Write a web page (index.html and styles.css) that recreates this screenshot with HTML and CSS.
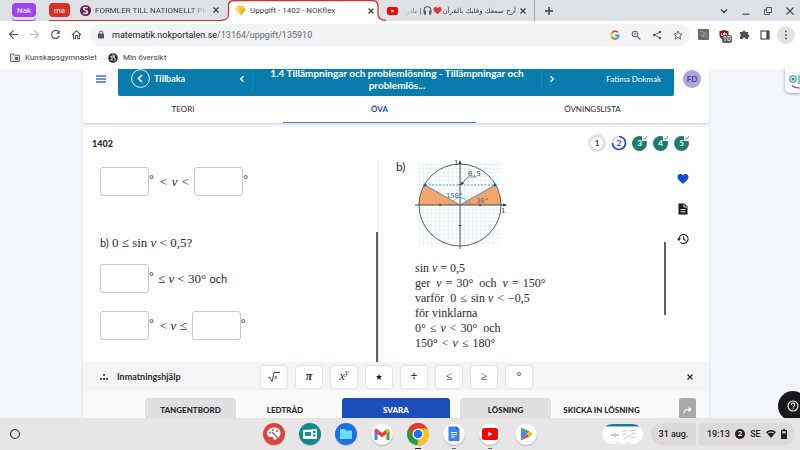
FILE: index.html
```html
<!DOCTYPE html>
<html lang="sv">
<head>
<meta charset="utf-8">
<title>Uppgift - 1402 - NOKflex</title>
<link rel="stylesheet" href="styles.css">
</head>
<body>
<div class="tabstrip">
  <button class="chip chip-purple">Nak</button>
  <div class="group">
    <button class="chip chip-red">ma</button>
    <div class="tab">
      <svg width="11" height="11" viewBox="0 0 11 11"><circle cx="5.500" cy="5.500" r="5.500" fill="#6b1d56"/><path d="M7.600 3C5.500 1.800 3.400 2.500 3.600 4c.2 1.500 4 1.300 3.900 3.100C7.300 8.900 4.500 8.800 3.200 7.800" fill="none" stroke="#fff" stroke-width="1.400"/></svg>
      <span class="tab-title">FORMLER TILL NATIONELLT PR</span>
      <button class="icon-btn" aria-label="Stäng flik"><svg width="8" height="8" viewBox="0 0 8 8"><path d="M1.500 1.500l5 5m0-5l-5 5" stroke="#3c4043" stroke-width="1.200"/></svg></button>
    </div>
  </div>
  <div class="tab tab-active">
    <svg class="tab-outline" width="170" height="21" viewBox="0 0 170 21"><path d="M0 20.300C6 20.300 7.500 18 7.500 14V6C7.500 2 9 .6 13 .6H151C155 .6 157 2 157 6v8c0 4 2 6.300 8 6.300V21H0z" fill="#fff"/><path d="M0 20.300C6 20.300 7.500 18 7.500 14V6C7.500 2 9 .6 13 .6H151C155 .6 157 2 157 6v8c0 4 2 6.300 8 6.300" fill="none" stroke="#c5352c" stroke-width="1.300"/></svg>
    <svg width="11" height="11" viewBox="0 0 11 11"><path d="M2.500 1h6L11 4.500 5.500 10.500 0 4.500z" fill="#fbc73b"/><path d="M2.500 1L4 4.500l1.500 6L0 4.500z" fill="#fddd7c"/><path d="M7 4.500L11 4.500 5.500 10.500z" fill="#eda91d"/></svg>
    <span class="tab-title">Uppgift - 1402 - NOKflex</span>
    <button class="icon-btn" aria-label="Stäng flik"><svg width="8" height="8" viewBox="0 0 8 8"><path d="M1.500 1.500l5 5m0-5l-5 5" stroke="#3c4043" stroke-width="1.200"/></svg></button>
  </div>
  <div class="tab tab-video">
    <svg width="11" height="8" viewBox="0 0 11 8"><rect width="11" height="8" rx="2" fill="#f00"/><path d="M4.300 2.200v3.600L7.400 4z" fill="#fff"/></svg>
    <span class="tab-title rtl" dir="rtl"><span>أرح سمعك وقلبك بالقرآن</span><svg width="9" height="9" viewBox="0 0 24 24"><path d="M12 22C5 16 1 13 1 8c0-6 8-8 11-2 3-6 11-4 11 2 0 5-4 8-11 14z" fill="#e8382f"/></svg><svg width="9" height="9" viewBox="0 0 24 24"><path d="M3 15v-4C3-1 21-1 21 11v4" fill="none" stroke="#555b63" stroke-width="3"/><rect x="2" y="12" width="6" height="11" rx="2" fill="#555b63"/><rect x="16" y="12" width="6" height="11" rx="2" fill="#555b63"/></svg><span>| نادر</span></span>
    <button class="icon-btn" aria-label="Stäng flik"><svg width="8" height="8" viewBox="0 0 8 8"><path d="M1.500 1.500l5 5m0-5l-5 5" stroke="#3c4043" stroke-width="1.200"/></svg></button>
  </div>
  <button class="icon-btn new-tab" aria-label="Ny flik"><svg width="10" height="10" viewBox="0 0 10 10"><path d="M5 1v8M1 5h8" stroke="#3c4043" stroke-width="1.500"/></svg></button>
  <div class="window-controls">
    <button class="icon-btn" aria-label="Sök flikar"><svg width="10" height="10" viewBox="0 0 10 10"><path d="M2 3.500l3 3 3-3" fill="none" stroke="#3c4043" stroke-width="1.400"/></svg></button>
    <button class="icon-btn" aria-label="Minimera"><svg width="10" height="10" viewBox="0 0 10 10"><path d="M1.500 8.200h7" stroke="#55595e" stroke-width="1.300"/></svg></button>
    <button class="icon-btn" aria-label="Återställ"><svg width="10" height="10" viewBox="0 0 10 10"><path d="M3.500 6.500v-5h5v5zM3.500 3.500h-2v5h5v-2" fill="none" stroke="#55595e"/></svg></button>
    <button class="icon-btn" aria-label="Stäng"><svg width="10" height="10" viewBox="0 0 10 10"><path d="M1.500 1.500l7 7m0-7l-7 7" stroke="#3c4043" stroke-width="1.100"/></svg></button>
  </div>
</div>

<div class="toolbar">
  <div class="nav">
    <button class="icon-btn" aria-label="Tillbaka"><svg width="11" height="11" viewBox="0 0 11 11"><path d="M10 5.500H1.500M5.500 1.500l-4 4 4 4" fill="none" stroke="#55595e" stroke-width="1.100"/></svg></button>
    <button class="icon-btn" aria-label="Framåt"><svg width="11" height="11" viewBox="0 0 11 11"><path d="M1 5.500h8.500M5.500 1.500l4 4-4 4" fill="none" stroke="#b9bcc1" stroke-width="1.100"/></svg></button>
    <button class="icon-btn" aria-label="Ladda om"><svg width="11" height="11" viewBox="0 0 11 11"><path d="M8.800 3A4 4 0 1 0 9.400 6.700" fill="none" stroke="#55595e" stroke-width="1.200"/><path d="M9.800 1v3.700H6.100z" fill="#55595e"/></svg></button>
    <button class="icon-btn" aria-label="Startsida"><svg width="11" height="11" viewBox="0 0 11 11"><path d="M1 6l4.500-4.300L10 6M2.500 5v4.700H4.500V6.500h2v3.200h2V5" fill="none" stroke="#55595e" stroke-width="1.100"/></svg></button>
  </div>
  <div class="omnibox">
    <svg width="8" height="9" viewBox="0 0 8 9"><rect x="1" y="3.500" width="6" height="5" rx=".6" fill="#55595e"/><path d="M2.400 4V2.500a1.600 1.600 0 0 1 3.200 0V4" fill="none" stroke="#55595e"/></svg>
    <span class="url"><b>matematik.nokportalen.se</b>/13164/uppgift/135910</span>
    <div class="omni-icons">
      <svg width="10" height="10" viewBox="0 0 10 10" fill="none" stroke-width="1.700"><path d="M8 2.500A3.600 3.600 0 0 0 2 3" stroke="#ea4335"/><path d="M2 3a3.600 3.600 0 0 0 0 4" stroke="#fbbc05"/><path d="M2 7a3.600 3.600 0 0 0 5.500 1" stroke="#34a853"/><path d="M7.500 8a3.600 3.600 0 0 0 1.200-2.700H5" stroke="#4285f4"/></svg>
      <svg width="10" height="10" viewBox="0 0 10 10"><circle cx="4" cy="4" r="2.900" fill="none" stroke="#55595e"/><path d="M6.300 6.300L9.300 9.300M2.700 4h2.600" stroke="#55595e" stroke-width="1.200"/></svg>
      <svg width="10" height="10" viewBox="0 0 10 10"><path d="M8 2L2.500 5 8 8" fill="none" stroke="#55595e" stroke-width=".9"/><g fill="#55595e"><circle cx="7.900" cy="2" r="1.300"/><circle cx="2.300" cy="5" r="1.300"/><circle cx="7.900" cy="8" r="1.300"/></g></svg>
      <svg width="10" height="10" viewBox="0 0 10 10"><path d="M5 1l1.200 2.700 3 .3-2.300 2 .7 3L5 7.400 2.400 9l.7-3L.8 4l3-.3z" fill="none" stroke="#55595e" stroke-width=".9"/></svg>
    </div>
  </div>
  <div class="extensions">
    <svg width="11" height="11" viewBox="0 0 11 11"><rect width="11" height="11" rx="1" fill="#6c6d70"/><path d="M2 3q3-2 4 1t3 0M2 6q2-1 3 1t4 0M4 9l3-6" fill="none" stroke="#a5a6a8" stroke-width=".8"/></svg>
    <div class="ublock"><svg width="10" height="10" viewBox="0 0 10 10"><path d="M5 0l4.500 1.200v4C9.500 8 7 9.500 5 10 3 9.500.5 8 .5 5.200v-4z" fill="#8d1016"/><path d="M2.500 3v2.500h2V3M5.500 2v4h2V3.800h-2" fill="none" stroke="#fff" stroke-width=".8"/></svg><span class="badge">10</span></div>
    <svg width="11" height="11" viewBox="0 0 11 11"><path d="M1 3h2.500a1.500 1.500 0 1 1 3 0H9v2.500a1.400 1.400 0 0 1 0 2.800V10H6.500a1.400 1.400 0 0 0-2.800 0H1V7.600a1.400 1.400 0 0 0 0-2.600z" fill="#4b4f54"/></svg>
    <svg width="10" height="10" viewBox="0 0 10 10"><rect x="1" y="1" width="8" height="8" fill="none" stroke="#4b4f54" stroke-width="1.200"/><path d="M6.300 1h2.700v8H6.300z" fill="#4b4f54"/></svg>
    <button class="more" aria-label="Meny"><svg width="4" height="10" viewBox="0 0 4 10" fill="#4b4f54"><circle cx="2" cy="1.500" r=".9"/><circle cx="2" cy="5" r=".9"/><circle cx="2" cy="8.500" r=".9"/></svg></button>
  </div>
</div>

<div class="bookmarks">
  <a href="#"><svg width="10" height="9" viewBox="0 0 10 9"><path d="M.6 1h3l1 1.200h4.800V8.400H.6z" fill="#e3e4e6" stroke="#606469"/><path d="M5 4h3v3H5z" fill="#606469"/></svg>Kunskapsgymnasiet</a>
  <a href="#"><svg width="10" height="10" viewBox="0 0 10 10"><circle cx="5" cy="5" r="4.800" fill="#2c2d2f"/><path d="M2 3l2 1v3M5 1v3l2 1v3M7 2L6 4M2.500 6l2 2" fill="none" stroke="#fff" stroke-width=".9"/></svg>Min översikt</a>
</div>

<div class="page">
  <main class="column">
    <header class="card header">
      <div class="header-row">
        <button class="icon-btn burger" aria-label="Meny"><svg width="10" height="8" viewBox="0 0 10 8"><path d="M0 1h10M0 4h10M0 7h10" stroke="#3a73c2" stroke-width="1.300"/></svg></button>
        <div class="banner">
          <a class="back" href="#"><svg width="19" height="19" viewBox="0 0 19 19" fill="none" stroke="#fff"><circle cx="9.500" cy="9.500" r="8.900" stroke-width=".9"/><path d="M11 6L7.500 9.500 11 13" stroke-width="1.600"/></svg>Tillbaka</a>
          <button class="icon-btn step" aria-label="Föregående"><svg width="6" height="8" viewBox="0 0 6 8"><path d="M4.500 1.200L1.700 4l2.800 2.800" fill="none" stroke="#fff" stroke-width="1.300"/></svg></button>
          <h1>1.4 Tillämpningar och problemlösning - Tillämpningar och problemlös...</h1>
          <button class="icon-btn step" aria-label="Nästa"><svg width="6" height="8" viewBox="0 0 6 8"><path d="M1.500 1.200L4.300 4 1.500 6.800" fill="none" stroke="#fff" stroke-width="1.300"/></svg></button>
          <span class="user">Fatima Dokmak</span>
        </div>
        <button class="avatar">FD</button>
      </div>
      <nav class="sections"><a href="#">TEORI</a><a href="#" class="current">ÖVA</a><a href="#">ÖVNINGSLISTA</a></nav>
    </header>

    <section class="card exercise">
      <div class="exercise-head">
        <h2>1402</h2>
        <div class="levels">
          <button class="level level-1">1</button>
          <button class="level level-2"><svg class="ring" width="16" height="16" viewBox="0 0 16 16"><path d="M8 1.500A6.500 6.500 0 1 1 1.500 8" fill="none" stroke="#2448b4" stroke-width="1.700"/><path d="M1.500 8A6.500 6.500 0 0 1 8 1.500" fill="none" stroke="#ccd3ea" stroke-width="1.700"/></svg><span>2</span></button>
          <button class="level done">3<svg class="tick" width="6" height="6" viewBox="0 0 6 6"><rect width="6" height="6" fill="#fff"/><path d="M1 3.200l1.200 1.300L5 1.200" fill="none" stroke="#1f7a74" stroke-width=".9"/></svg></button>
          <button class="level done">4<svg class="tick" width="6" height="6" viewBox="0 0 6 6"><rect width="6" height="6" fill="#fff"/><path d="M1 3.200l1.200 1.300L5 1.200" fill="none" stroke="#1f7a74" stroke-width=".9"/></svg></button>
          <button class="level done">5<svg class="tick" width="6" height="6" viewBox="0 0 6 6"><rect width="6" height="6" fill="#fff"/><path d="M1 3.200l1.200 1.300L5 1.200" fill="none" stroke="#1f7a74" stroke-width=".9"/></svg></button>
        </div>
      </div>
      <div class="work">
        <div class="question">
          <div class="answer first"><input aria-label="Nedre gräns a"><sup>°</sup><span class="rel wide">&lt;&emsp13;<i>v</i>&emsp13;&lt;</span><input aria-label="Övre gräns a"><sup>°</sup></div>
          <p class="prompt"><span class="sans">b)</span> 0 ≤ sin <i>v</i> &lt; 0,5?</p>
          <div class="answer"><input aria-label="Nedre gräns b"><sup>°</sup><span class="rel">≤ <i>v</i> &lt; 30° <span class="sans">och</span></span></div>
          <div class="answer"><input aria-label="Nedre gräns c"><sup>°</sup><span class="rel wide">&lt; <i>v</i> ≤</span><input aria-label="Övre gräns c"><sup>°</sup></div>
          <div class="scroll scroll-left"></div>
        </div>
        <div class="solution">
          <span class="part">b)</span>
          <div class="solution-body">
            <svg class="figure" width="94" height="94" viewBox="0 0 94 94">
              <defs><pattern id="grid" width="4.100" height="4.100" patternUnits="userSpaceOnUse" x="4" y="5"><path d="M0 0H4.100M0 0V4.100" stroke="#c3e3ef" stroke-width=".7"/></pattern></defs>
              <rect x="4" y="5" width="82" height="82" fill="url(#grid)"/>
              <path d="M45 46L10 26A41 41 0 0 0 4 46z" fill="#f3a56b"/><path d="M45 46L80 26A41 41 0 0 1 86 46z" fill="#f3a56b"/>
              <circle cx="45" cy="46" r="41" fill="none" stroke="#4c4d50" stroke-width=".9"/>
              <path d="M0 46h91M45 90V3M25 44.500v3M65 44.500v3M43.500 25.500h3M43.500 66.500h3" stroke="#3c3d40" stroke-width=".9"/>
              <path d="M92 46l-4-1.500v3zM45 1l-1.500 4h3z" fill="#2f3033"/>
              <path d="M10 26h70" stroke="#577b9b" stroke-width=".8" stroke-dasharray="2 1.500"/>
              <path d="M10 26L45 46 80 26" fill="none" stroke="#4f81ad" stroke-width=".9"/>
              <path d="M39 42A7 7 0 0 1 52 46M55 46a10 10 0 0 0-1.500-5" fill="none" stroke="#4f81ad" stroke-width=".7"/>
              <circle cx="10" cy="26" r="1.500" fill="#1c5fae"/><circle cx="80" cy="26" r="1.500" fill="#1c5fae"/>
              <path d="M53 18l-7 7.500M46 25.500l.8-2.500 1.600 1.600z" stroke="#333" stroke-width=".7"/>
              <path d="M53 18h9" stroke="#555" stroke-width=".6"/>
              <g class="fig-label"><text x="53" y="17">0,5</text><text x="31" y="39" class="angle">150°</text><text x="61" y="44" class="angle">30°</text><text x="39" y="6">1</text><text x="86" y="54">1</text></g>
            </svg>
            <p>sin <i>v</i> = 0,5<br>ger &nbsp;<i>v</i>&emsp13;=&emsp13;30° &nbsp;och &nbsp;<i>v</i>&emsp13;=&emsp13;150°<br>varför &nbsp;0&emsp13;≤&emsp13;sin <i>v</i>&emsp13;&lt;&emsp13;−0,5<br>för vinklarna<br>0°&emsp13;≤&emsp13;<i>v</i>&emsp13;&lt;&emsp13;30° &nbsp;och<br>150°&emsp13;&lt;&emsp13;<i>v</i>&emsp13;≤&emsp13;180°</p>
          </div>
          <div class="scroll scroll-right"></div>
        </div>
        <aside class="tools">
          <button class="icon-btn" aria-label="Favorit"><svg width="12" height="12" viewBox="0 0 24 24"><path d="M12 22C5 15.500 1 12.500 1 8c0-6.500 8-8 11-3 3-5 11-3.500 11 3 0 4.500-4 7.500-11 14z" fill="#0b4fd0"/></svg></button>
          <button class="icon-btn" aria-label="Dokument"><svg width="12" height="12" viewBox="0 0 12 12"><path d="M1.500 .5h6L10.500 3.500v8h-9z" fill="#1a1a1a"/><path d="M7 1v3h3M3.500 6.500h5M3.500 8.800h5" fill="none" stroke="#fff" stroke-width=".9"/></svg></button>
          <button class="icon-btn" aria-label="Historik"><svg width="12" height="12" viewBox="0 0 12 12"><path d="M2 6a4.500 4.500 0 1 1 1.500 3.300M6.700 3.500v2.800l2 1.200" fill="none" stroke="#1a1a1a" stroke-width="1.100"/><path d="M0 5.500h4L2 8z" fill="#1a1a1a"/></svg></button>
        </aside>
      </div>
      <div class="helper">
        <span class="helper-title"><svg width="8" height="6" viewBox="0 0 8 6" fill="#1a1a1a"><path d="M3.200 0h1.700v1.700H3.200zM0 4h1.700v1.700H0zM3.200 4h1.700v1.700H3.200zM6.300 4H8v1.700H6.300z"/></svg>Inmatningshjälp</span>
        <div class="keys">
          <button aria-label="Kvadratrot"><svg width="12" height="12" viewBox="0 0 12 12"><path d="M0 7l1.500-1L4 10.500 6 1.500h6" fill="none" stroke="#222" stroke-width=".8"/><text x="6" y="8" class="root">x</text></svg></button>
          <button><b><i>π</i></b></button>
          <button><i>x<sup>y</sup></i></button>
          <button aria-label="Gånger"><svg width="6" height="6" viewBox="0 0 10 10"><path d="M5 0l1.300 3.300L10 3.700 7.200 6 8.200 10 5 7.700 1.800 10 2.800 6 0 3.700 3.700 3.300z" fill="#111"/></svg></button>
          <button><b>÷</b></button>
          <button>≤</button>
          <button>≥</button>
          <button><b>°</b></button>
        </div>
        <button class="icon-btn" aria-label="Stäng inmatningshjälp"><svg width="6" height="6" viewBox="0 0 6 6"><path d="M.5 .5l5 5m0-5l-5 5" stroke="#222" stroke-width="1.100"/></svg></button>
      </div>
      <div class="actions">
        <button class="grey">TANGENTBORD</button>
        <button class="plain">LEDTRÅD</button>
        <button class="primary">SVARA</button>
        <button class="grey">LÖSNING</button>
        <button class="plain send">SKICKA IN LÖSNING</button>
        <button class="share" aria-label="Dela"><svg width="9" height="8" viewBox="0 0 9 8"><path d="M1 7.500Q1 3.500 5 3.500h1.500" fill="none" stroke="#fff" stroke-width="1.200"/><path d="M5.500 .8L8.700 3.500 5.500 6.200z" fill="#fff"/></svg></button>
      </div>
    </section>
  </main>
  <div class="widget"><svg width="15" height="19" viewBox="0 0 15 19"><g fill="none"><circle cx="8" cy="7" r="3.200" stroke="#238a93" stroke-width="1.100"/><path d="M14 3v9" stroke="#238a93" stroke-width="1.100"/><path d="M7 13.500q2.500 2.500 8 2.500" stroke="#cc4450" stroke-width="1.200"/></g><circle cx="8" cy="7" r="1.500" fill="#238a93"/></svg></div>
  <button class="help" aria-label="Hjälp"><svg width="12" height="12" viewBox="0 0 12 12"><circle cx="6" cy="6" r="5" fill="none" stroke="#fff" stroke-width="1.100"/><path d="M4.300 4.800a1.700 1.700 0 1 1 2.600 1.400Q6 6.700 6 7.400M6 8.400v1" fill="none" stroke="#fff" stroke-width="1.100"/></svg></button>
</div>

<footer class="shelf">
  <button class="icon-btn launcher" aria-label="Startprogram"><svg width="12" height="12" viewBox="0 0 12 12"><circle cx="6" cy="6" r="4.500" fill="none" stroke="#333" stroke-width="1.200"/></svg></button>
  <div class="apps">
    <button class="app" aria-label="Rita"><svg width="22" height="22" viewBox="0 0 22 22"><circle cx="11" cy="11" r="11" fill="#dc4437"/><path d="M11 4.500c-4 0-7 3-7 6s3 4 5 3.500c1.500-.3 1.500 1 1.500 2.200 0 1.800 7-1 7-5.700s-3-6-6.500-6z" fill="#fff"/><path d="M9 9l6 6" stroke="#a83dc0" stroke-width="1.300"/><g fill="#dc4437"><circle cx="7" cy="9.500" r="1"/><circle cx="10" cy="7" r="1"/><circle cx="14" cy="8" r="1"/></g></svg></button>
    <button class="app" aria-label="Skärminspelning"><svg width="22" height="22" viewBox="0 0 22 22"><circle cx="11" cy="11" r="11" fill="#0e8c8c"/><path d="M4 7l14-1v10H4z" fill="#fff"/><path d="M6 9h6v4H6zM14 8h2.500v2H14zM14 11.500h2.500v2H14z" fill="#16918f"/></svg></button>
    <button class="app" aria-label="Filer"><svg width="22" height="22" viewBox="0 0 22 22"><circle cx="11" cy="11" r="11" fill="#1b70e6"/><path d="M5 6h4.500l1.500 1.500h6V16H5z" fill="#6bdcfb"/></svg></button>
    <button class="app" aria-label="Gmail"><svg width="22" height="22" viewBox="0 0 22 22"><circle cx="11" cy="11" r="10.500" fill="#fff"/><path d="M3.500 7.500L6.500 9v8h-3z" fill="#4285f4"/><path d="M18.500 7.500L15.500 9v8h3z" fill="#34a853"/><path d="M15.500 6.500q3-2 3 2l-3 2.500z" fill="#fbbc04"/><path d="M3.500 8.500q0-4 3-2L11 10l4.500-3.500V11L11 14.300 6.500 11z" fill="#ea4335"/></svg></button>
    <button class="app running" aria-label="Chrome"><svg width="22" height="22" viewBox="0 0 22 22"><circle cx="11" cy="11" r="11" fill="#fbc116"/><path d="M1.500 5.500A11 11 0 0 1 20.500 5.500H11L6.200 13.700z" fill="#e33b2e"/><path d="M1.500 5.500L6.200 13.700 11 16.500 10.300 22A11 11 0 0 1 1.500 5.500z" fill="#229a48"/><circle cx="11" cy="11" r="5.500" fill="#fff"/><circle cx="11" cy="11" r="4.300" fill="#1a73e8"/></svg></button>
    <button class="app idle" aria-label="Dokument"><svg width="22" height="22" viewBox="0 0 22 22"><circle cx="11" cy="11" r="10.500" fill="#fff"/><path d="M5.500 3.500h8l3 3V18h-11z" fill="#3b82f0"/><path d="M13.500 3.500l3 3h-3z" fill="#1c57bb"/><path d="M8 9.500h6M8 11.700h6M8 14h4" stroke="#fff"/></svg></button>
    <button class="app idle" aria-label="YouTube"><svg width="22" height="22" viewBox="0 0 22 22"><circle cx="11" cy="11" r="10.500" fill="#fff"/><rect x="3" y="5" width="16" height="12" rx="2.500" fill="#f00"/><path d="M9.300 8.500v5l4-2.500z" fill="#fff"/></svg></button>
    <button class="app" aria-label="Play Butik"><svg width="22" height="22" viewBox="0 0 22 22"><circle cx="11" cy="11" r="10.500" fill="#fff"/><path d="M6 4.500v13L12 11z" fill="#4285f4"/><path d="M6 4.500L12 11l2.500-2.500z" fill="#34a853"/><path d="M6 17.500L12 11l2.500 2.500z" fill="#ea4335"/><path d="M14.500 8.500L18 11l-3.500 2.500L12 11z" fill="#fbbc04"/></svg></button>
  </div>
  <div class="status">
    <button class="preview" aria-label="Skärmbild"><svg width="41" height="20" viewBox="0 0 41 20"><rect width="41" height="20" fill="#fff"/><path d="M0 0h41v2.500H0z" fill="#197d99"/><path d="M9 11h3M13 9v4M14 11h3" stroke="#c08965"/><path d="M20 8l6-2M20 11l5-1M27 7l8-1M22 15l12-7M28 14l7-1M14 19h4M24 19h4" stroke="#c5c5c5" stroke-width=".8"/></svg></button>
    <button class="pill date">31 aug.</button>
    <button class="pill clock"><span>19:13</span><span class="count">2</span><span>SE</span><svg width="10" height="8" viewBox="0 0 10 8"><path d="M0 2Q5-2 10 2L5 8z" fill="#222"/><path d="M2 3q3-2 6 0" stroke="#e0dfe0" fill="none" stroke-width=".9"/></svg><svg width="6" height="10" viewBox="0 0 6 10"><path d="M2 0h2v1h2v9H0V1h2z" fill="#222"/><path d="M1.200 2.300h3.600v2H1.200z" fill="#ddd"/></svg></button>
  </div>
</footer>
</body>
</html>
```
FILE: styles.css
```css
* { box-sizing: border-box; }
body {
  margin: 0;
  height: 100vh;
  display: flex;
  flex-direction: column;
  overflow: hidden;
  font-family: Roboto, sans-serif;
  font-size: 8px;
  color: #3c4043;
  background: #fff;
}
button, input { font: inherit; color: inherit; padding: 0; border: 0; background: none; }
a { color: inherit; text-decoration: none; }
svg { display: block; flex: none; }
h1, h2, p { margin: 0; }
.icon-btn { display: flex; align-items: center; justify-content: center; }

/* Tab strip */
.tabstrip { display: flex; height: 21px; flex: none; background: #dee1e6; padding-left: 12px; }
.chip { height: 14px; margin-top: 3px; border-radius: 4px; color: #fff; flex: none; }
.chip-purple { width: 24px; background: #a142f4; box-shadow: 0 3px #dee1e6, 0 4px #a142f4; }
.chip-red { width: 21px; background: #d93025; }
.group { display: flex; margin-left: 13px; width: 172px; border-bottom: 1px solid #c5352c; }
.tab { display: flex; align-items: center; min-width: 0; }
.group .tab { margin-left: 10px; flex: 1; }
.group .tab-title { margin-left: 4px; width: 112px; mask-image: linear-gradient(90deg, #000 85%, transparent); }
.group .icon-btn { margin-left: 5px; }
.tab-title { overflow: hidden; white-space: nowrap; }
.tab-active { position: relative; width: 166px; flex: none; padding-left: 14px; }
.tab-active > :not(.tab-outline) { position: relative; }
.tab-outline { position: absolute; left: 0; top: 0; }
.tab-active .tab-title { flex: 1; margin-left: 4px; }
.tab-active .icon-btn { margin-right: 12px; }
.tab-video { width: 148px; flex: none; border-right: 1px solid #a6a9ae; }
.rtl { display: flex; align-items: center; gap: 1px; flex: 1; margin: 0 3px 0 5px; font-family: "DejaVu Sans", sans-serif; font-size: 7px; mask-image: linear-gradient(270deg, #000 85%, transparent); }
.rtl span { flex: none; }
.tab-video .icon-btn { margin-right: 7px; }
.new-tab { margin-left: 9px; }
.window-controls { display: flex; gap: 12px; margin-left: auto; padding-right: 5px; }

/* Address bar */
.toolbar { display: flex; align-items: center; height: 27px; flex: none; }
.nav { display: flex; gap: 10px; width: 90px; padding-left: 8px; }
.omnibox { display: flex; align-items: center; flex: 1; height: 22px; padding: 0 7px; border-radius: 11px; background: #f1f3f4; }
.url { margin-left: 7px; font-size: 9px; color: #66696e; }
.url b { font-weight: 400; color: #202124; }
.omni-icons { display: flex; gap: 11px; margin-left: auto; }
.extensions { display: flex; align-items: center; gap: 10px; padding: 0 5px 0 8px; }
.ublock { position: relative; }
.badge { position: absolute; left: 3px; top: 5px; padding: 0 1px; border-radius: 2px; background: #606164; color: #fff; font-size: 7px; line-height: 8px; }
.more { display: flex; align-items: center; justify-content: center; width: 18px; height: 18px; margin-left: -3px; border-radius: 50%; background: #e1e2e3; }
.bookmarks { display: flex; align-items: center; gap: 11px; height: 21px; flex: none; padding: 0 0 2px 10px; }
.bookmarks a { display: flex; align-items: center; gap: 5px; }

/* Page */
.page { position: relative; flex: 1; min-height: 0; display: flex; padding: 0 91px 0 83px; overflow: hidden; background: #f2f6fb; font-family: Lato, sans-serif; color: #2a2a2a; }
.column { display: flex; flex-direction: column; flex: 1; min-width: 0; margin-top: -8px; gap: 4px; }
.card { background: #fff; box-shadow: 0 1px 2px #ccd2dc; }
.header-row { display: flex; align-items: center; }
.burger { width: 35px; }
.banner { display: flex; align-items: center; flex: 1; height: 35px; padding: 0 13px; border-radius: 2px; background: #087cad; color: #fff; }
.back { display: flex; align-items: center; gap: 4px; width: 105px; font-size: 9px; font-weight: 700; }
.step { width: 12px; height: 24px; flex: none; }
.back + .step { margin: 0 4px 0 0; }
.banner h1 { flex: 1; padding: 0 10px; border: solid #1a85b3; border-width: 0 1px; font-size: 10px; line-height: 12px; font-weight: 700; text-align: center; }
.banner h1 + .step { margin-left: 4px; }
.step + .user { width: 103px; text-align: right; }
.avatar { width: 18px; height: 18px; margin: 0 8px 0 9px; border-radius: 50%; background: #aea3d8; color: #5540a0; font-weight: 700; }
.sections { display: grid; grid-template-columns: 200fr 193fr 233fr; height: 27px; text-align: center; line-height: 26px; }
.current { color: #174a9c; font-weight: 700; border-bottom: 1px solid #5d7eb2; }
.exercise { flex: 1; min-height: 0; display: flex; flex-direction: column; }
.exercise-head { display: flex; align-items: center; justify-content: space-between; height: 32px; padding: 0 19px 0 9px; flex: none; }
.exercise-head h2 { font-size: 9px; font-weight: 900; }
.levels { display: flex; align-items: center; gap: 5px; font-weight: 700; }
.level { position: relative; width: 16px; height: 16px; border-radius: 50%; }
.level-1 { width: 18px; height: 18px; border: 3px solid #dfe1ec; background: #fff; color: #303d70; }
.level-2 { color: #2448b4; }
.level-2 span { position: relative; }
.ring { position: absolute; left: 0; top: 0; }
.done { width: 15px; height: 15px; background: #1f7a74; color: #fff; }
.tick { position: absolute; right: -1px; top: -1px; }
.levels .done { margin-right: 1px; }

.work { display: flex; flex: 1; min-height: 0; font-family: "Liberation Serif", serif; font-size: 12px; }
.question, .solution { position: relative; }
.question { width: 296px; padding: 8px 17px 0; border-right: 1px solid #e9eaec; font-size: 13px; }
.answer { display: flex; align-items: center; margin-bottom: 18px; }
.answer input { width: 49px; height: 29px; border: 1px solid #c9c9c9; border-radius: 3px; background: #fff; }
.answer sup { align-self: flex-start; line-height: 24px; width: 6px; font-size: 12px; }
.rel { padding: 0 3px; white-space: nowrap; }
.wide { padding: 0 5px; }
.first { margin-bottom: 39px; }
.prompt { line-height: 15px; margin-bottom: 14px; }
.sans { font-family: Lato, sans-serif; font-size: 11px; }
.scroll { position: absolute; width: 2px; background: #606060; }
.scroll-left { right: 0; top: 73px; bottom: 0; }
.scroll-right { right: 0; top: 83px; height: 73px; }
.solution { display: flex; flex: 1; padding-left: 17px; }
.part { width: 19px; font: 12px/15px Lato, sans-serif; }
.solution p { line-height: 15px; margin-top: 8px; white-space: nowrap; }
.fig-label { font: 7px "DejaVu Sans Mono", monospace; fill: #444; }
.angle { fill: #456f98; }
.tools { display: flex; flex-direction: column; align-items: center; gap: 18px; width: 43px; padding: 14px 9px 0 0; }

.helper { display: flex; align-items: center; height: 29px; flex: none; padding: 0 16px 0 17px; background: #f4f5f7; }
.helper-title { display: flex; align-items: center; gap: 9px; width: 161px; font-size: 9px; font-weight: 700; }
.keys { display: flex; gap: 9px; flex: 1; font-family: "Liberation Serif", serif; font-size: 12px; }
.keys button { display: flex; align-items: center; justify-content: center; width: 26px; height: 22px; border-radius: 3px; background: #fff; box-shadow: 0 0 2px #bbb; }
.keys sup { font-size: 8px; line-height: 0; }
.root { font: italic 7px "Liberation Serif", serif; }
.actions { display: flex; height: 27px; flex: none; padding: 7px 13px 0 62px; background: #fafafa; font-weight: 900; overflow: hidden; }
.actions button { height: 24px; flex: none; border-radius: 3px; }
.grey { width: 91px; background: #e0e0e0; }
.plain { width: 98px; }
.primary { width: 108px; margin: 0 10px 0 8px; background: #1c4fbc; color: #fff; }
.send { width: 101px; }
.actions .share { display: flex; align-items: center; justify-content: center; width: 17px; margin-left: auto; background: #aaa; }
.widget { position: absolute; right: 0; top: -6px; padding: 9px 0 2px; background: #fff; border-radius: 0 0 0 5px; box-shadow: 0 1px 3px #999; }
.help { position: absolute; right: -8px; bottom: -3px; display: flex; align-items: center; padding-left: 9px; width: 30px; height: 30px; border-radius: 50%; background: #181818; }

/* Shelf */
.shelf { display: grid; grid-template-columns: 1fr auto 1fr; align-items: center; height: 32px; flex: none; background: #e7e5e6; font-size: 9px; color: #222; font-weight: 500; }
.launcher { width: 12px; margin-left: 9px; }
.apps { display: flex; gap: 14px; }
.app { position: relative; border-radius: 50%; box-shadow: 0 1px 1px #bbb; }
.running::after, .idle::after { content: ""; position: absolute; bottom: -4px; left: 9px; width: 4px; height: 1px; background: #666; }
.running::after { left: 8px; width: 6px; background: #222; }
.status { display: flex; align-items: center; justify-content: flex-end; padding-right: 5px; }
.preview { border-radius: 10px; overflow: hidden; margin-right: 8px; }
.pill { height: 22px; background: #dcdadb; }
.date { width: 45px; margin-right: 3px; border-radius: 11px 0 0 11px; }
.clock { display: flex; align-items: center; justify-content: space-between; width: 96px; padding: 0 8px; border-radius: 0 11px 11px 0; }
.count { width: 10px; height: 10px; border-radius: 50%; background: #222; color: #fff; font-size: 8px; line-height: 10px; }
```
